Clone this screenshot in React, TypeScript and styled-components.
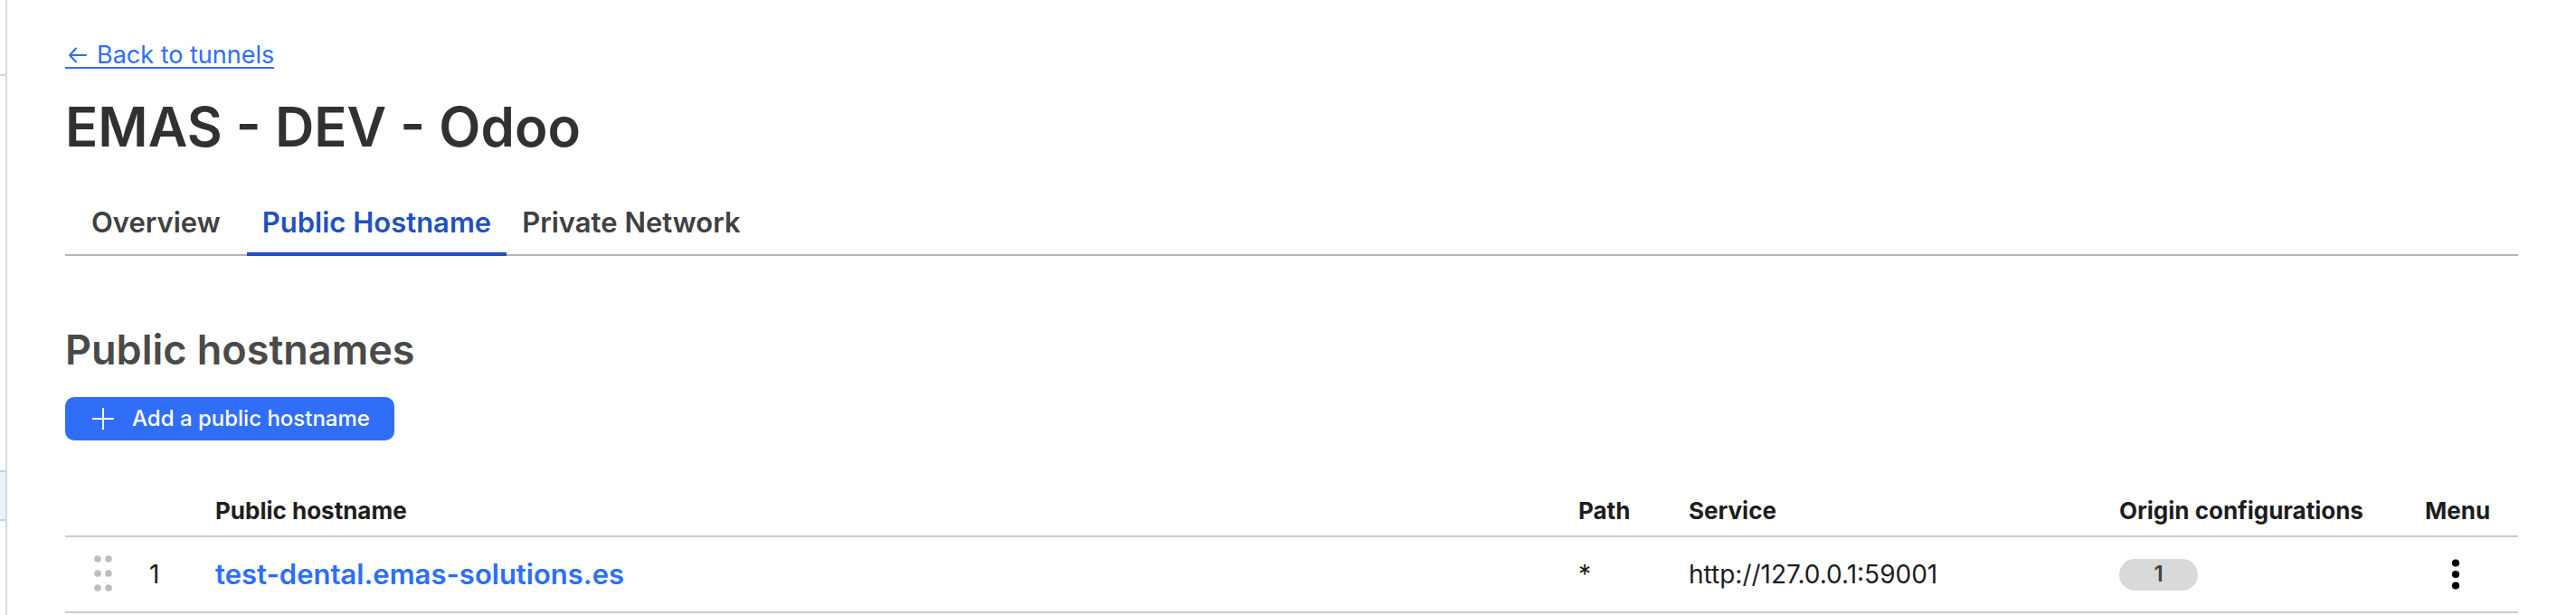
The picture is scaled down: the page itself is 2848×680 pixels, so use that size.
import React, { useState } from "react";
import styled, { createGlobalStyle, css } from "styled-components";

const GlobalStyle = createGlobalStyle`
  *, *::before, *::after { box-sizing: border-box; }
  body {
    margin: 0;
    background: #fff;
    color: #1d1d1d;
    font-family: Inter, "Liberation Sans", sans-serif;
    font-size: 28px;
    line-height: 32px;
  }
  svg { display: block; }
`;

const Shell = styled.div`
  display: flex;
  min-height: 100vh;
`;

const SidebarEdge = styled.aside`
  flex: none;
  width: 8px;
  border-right: 2px solid #d9d9d9;
`;

const SidebarHeader = styled.div`
  height: 84px;
  border-bottom: 2px solid #d9d9d9;
`;

const SidebarActive = styled.div`
  height: 56px;
  margin-top: 436px;
  background: #ebf2ff;
  border: solid #bdd3ff;
  border-width: 2px 0;
`;

const Main = styled.main`
  flex: 1;
  min-width: 0;
  padding: 44px 64px 0;
`;

const BackLink = styled.a`
  display: flex;
  align-items: center;
  gap: 8px;
  width: fit-content;
  height: 32px;
  padding-top: 4px;
  color: #2c6ef9;
  font-size: 27px;
  text-decoration: none;
  border-bottom: 2px solid currentColor;
`;

const Title = styled.h1`
  margin: 24px 0 0;
  color: #313131;
  font-size: 60px;
  line-height: 80px;
  font-weight: 600;
`;

const TabList = styled.div`
  display: flex;
  margin-top: 32px;
  box-shadow: inset 0 -2px #b6b6b6;
`;

const Tab = styled.button<{ $active: boolean }>`
  height: 71px;
  padding: 0 17px;
  background: none;
  border: 0;
  border-bottom: 4px solid transparent;
  color: #404040;
  font: inherit;
  font-size: 31px;
  font-weight: 600;
  cursor: pointer;
  &:first-child {
    margin: 0 12px;
  }
  ${(p) =>
    p.$active &&
    css`
      color: #1f51bf;
      border-color: currentColor;
    `}
`;

const SectionTitle = styled.h2`
  margin: 72px 0 0;
  color: #4a4a4a;
  font-size: 45px;
  line-height: 64px;
  font-weight: 600;
`;

const AddButton = styled.button`
  display: flex;
  align-items: center;
  gap: 18px;
  height: 48px;
  margin-top: 20px;
  padding: 0 27px 0 28px;
  background: #316ef8;
  border: 0;
  border-radius: 10px;
  color: #fff;
  font: inherit;
  font-size: 24px;
  font-weight: 500;
  cursor: pointer;
`;

const HostTable = styled.table`
  width: 100%;
  margin-top: 36px;
  table-layout: fixed;
  border-collapse: collapse;
`;

const Col = styled.col<{ $width?: number }>`
  ${(p) => p.$width && `width: ${p.$width}px;`}
`;

const Row = styled.tr`
  border-bottom: 2px solid #ccc;
`;

const HeadCell = styled.th`
  height: 70px;
  padding: 14px 0 0;
  font-size: 26px;
  font-weight: 700;
  text-align: left;
  white-space: nowrap;
`;

const Cell = styled.td`
  height: 84px;
  padding: 0;
  white-space: nowrap;
`;

const Order = styled.div`
  display: flex;
  align-items: center;
  gap: 37px;
  padding-left: 32px;
`;

const GripButton = styled.button`
  padding: 0;
  background: none;
  border: 0;
  color: #bdbdbd;
  cursor: grab;
`;

const HostLink = styled.a`
  color: #2c6ef9;
  font-size: 31px;
  font-weight: 600;
  text-decoration: none;
`;

const Badge = styled.span`
  display: flex;
  align-items: center;
  justify-content: center;
  width: 87px;
  height: 35px;
  border-radius: 18px;
  background: #d9d9d9;
  color: #404040;
  font-size: 24px;
  font-weight: 600;
`;

const MenuButton = styled.button`
  display: block;
  padding: 0 29px;
  background: none;
  border: 0;
  color: #000;
  cursor: pointer;
`;

const ArrowLeft = () => (
  <svg width="27" height="24" viewBox="0 0 27 24" fill="none" stroke="currentColor" strokeWidth="2" strokeLinecap="round" strokeLinejoin="round" aria-hidden="true">
    <path d="M23 12H5M12 4.500L5 12L12 19.500" />
  </svg>
);

const Plus = () => (
  <svg width="28" height="28" viewBox="0 0 28 28" stroke="currentColor" strokeWidth="2" aria-hidden="true">
    <path d="M14 2V26M2 14H26" />
  </svg>
);

const Grip = () => (
  <svg width="24" height="42" viewBox="0 0 24 42" fill="currentColor" aria-hidden="true">
    {[4, 20, 36].map((y) => (
      <React.Fragment key={y}>
        <circle cx="4" cy={y} r="3.8" />
        <circle cx="16" cy={y} r="3.8" />
      </React.Fragment>
    ))}
  </svg>
);

const Kebab = () => (
  <svg width="10" height="36" viewBox="0 0 10 36" fill="currentColor" aria-hidden="true">
    <circle cx="5" cy="5.5" r="4.1" />
    <circle cx="5" cy="18" r="4.1" />
    <circle cx="5" cy="30.5" r="4.1" />
  </svg>
);

const tabs = ["Overview", "Public Hostname", "Private Network"];

const hosts = [
  { name: "test-dental.emas-solutions.es", path: "*", service: "http://127.0.0.1:59001", configs: 1 },
];

export default function App() {
  const [active, setActive] = useState("Public Hostname");
  return (
    <>
      <GlobalStyle />
      <Shell>
        <SidebarEdge>
          <SidebarHeader />
          <SidebarActive />
        </SidebarEdge>
        <Main>
          <BackLink href="#tunnels">
            <ArrowLeft />
            Back to tunnels
          </BackLink>
          <Title>EMAS - DEV - Odoo</Title>
          <TabList role="tablist">
            {tabs.map((tab) => (
              <Tab key={tab} type="button" role="tab" aria-selected={tab === active} $active={tab === active} onClick={() => setActive(tab)}>
                {tab}
              </Tab>
            ))}
          </TabList>
          <SectionTitle>Public hostnames</SectionTitle>
          <AddButton type="button">
            <Plus />
            Add a public hostname
          </AddButton>
          <HostTable>
            <colgroup>
              <Col $width={166} />
              <Col />
              <Col $width={122} />
              <Col $width={476} />
              <Col $width={338} />
              <Col $width={103} />
            </colgroup>
            <thead>
              <Row>
                <HeadCell aria-label="Order" />
                <HeadCell scope="col">Public hostname</HeadCell>
                <HeadCell scope="col">Path</HeadCell>
                <HeadCell scope="col">Service</HeadCell>
                <HeadCell scope="col">Origin configurations</HeadCell>
                <HeadCell scope="col">Menu</HeadCell>
              </Row>
            </thead>
            <tbody>
              {hosts.map((host, i) => (
                <Row key={host.name}>
                  <Cell>
                    <Order>
                      <GripButton type="button" aria-label={`Reorder ${host.name}`}>
                        <Grip />
                      </GripButton>
                      {i + 1}
                    </Order>
                  </Cell>
                  <Cell>
                    <HostLink href={`https://${host.name}`}>{host.name}</HostLink>
                  </Cell>
                  <Cell>{host.path}</Cell>
                  <Cell>{host.service}</Cell>
                  <Cell>
                    <Badge>{host.configs}</Badge>
                  </Cell>
                  <Cell>
                    <MenuButton type="button" aria-label={`Menu for ${host.name}`}>
                      <Kebab />
                    </MenuButton>
                  </Cell>
                </Row>
              ))}
            </tbody>
          </HostTable>
        </Main>
      </Shell>
    </>
  );
}
